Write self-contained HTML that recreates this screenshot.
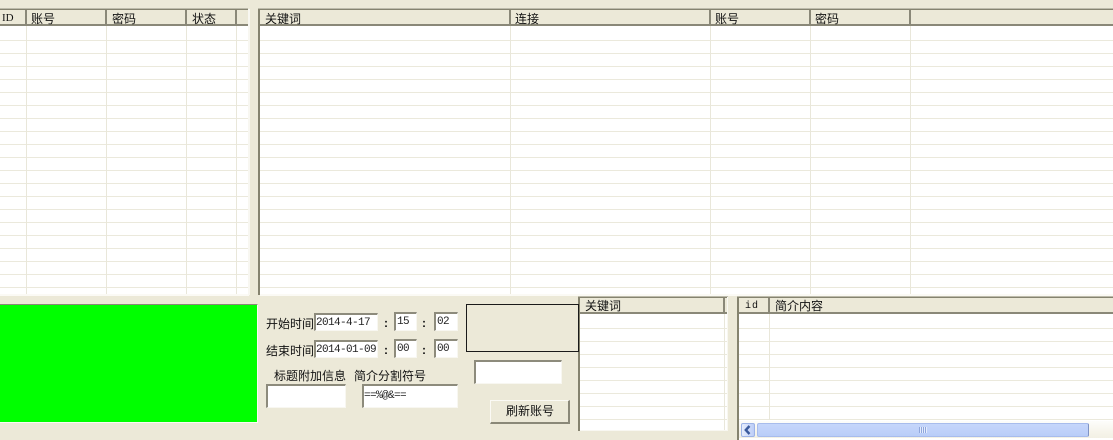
<!DOCTYPE html>
<html><head><meta charset="utf-8">
<style>
html,body{margin:0;padding:0;width:1113px;height:440px;overflow:hidden;background:#ece9d8;}
body{position:relative;font:12px/14px "Liberation Sans","WenQuanYi Zen Hei","Noto Sans CJK SC",sans-serif;color:#111;}
div{position:absolute;box-sizing:border-box;}
.grid{background-color:#fff;background-image:repeating-linear-gradient(to bottom,#fff 0,#fff 12px,#ebe9dc 12px,#ebe9dc 13px);}
.top{background:#85836f;height:1px;box-shadow:0 -1px 0 #bdbbab;}
.hd{background:#ece9d8;}
.hl{background:#8a8878;height:2px;}
.v{width:1px;background:#e9e7da;}
.s{width:2px;background:#8a8878;}
.t{white-space:nowrap;line-height:14px;}
.in{background:#fff;border-top:2px solid #8d8b7c;border-left:2px solid #8d8b7c;border-right:1px solid #f8f7f1;border-bottom:1px solid #f8f7f1;font:11px/17px "Liberation Mono",monospace;letter-spacing:-.6px;color:#222;white-space:nowrap;overflow:hidden;}
</style></head><body>

<!-- top left grid -->
<div class="grid" style="left:0;top:28px;width:248px;height:266px"></div>
<div style="left:0;top:26px;width:248px;height:2px;background:#fff"></div>
<div style="left:0;top:294px;width:249px;height:2px;background:#fbfaf5"></div>
<div style="left:248px;top:9px;width:2px;height:286px;background:#f8f7f1"></div>
<div class="top" style="left:0;top:9px;width:248px"></div>
<div class="hd" style="left:0;top:10px;width:248px;height:15px"></div>
<div class="hl" style="left:0;top:24px;width:248px"></div>
<div class="s" style="left:25px;top:10px;height:14px"></div>
<div class="s" style="left:105px;top:10px;height:14px"></div>
<div class="s" style="left:185px;top:10px;height:14px"></div>
<div class="s" style="left:235px;top:10px;height:14px"></div>
<div class="v" style="left:26px;top:26px;height:268px"></div>
<div class="v" style="left:106px;top:26px;height:268px"></div>
<div class="v" style="left:186px;top:26px;height:268px"></div>
<div class="v" style="left:236px;top:26px;height:268px"></div>
<div class="t" style="left:2px;top:11px;font:11px/14px 'Liberation Serif',serif">ID</div>
<div class="t" style="left:31px;top:12px">账号</div>
<div class="t" style="left:112px;top:12px">密码</div>
<div class="t" style="left:192px;top:12px">状态</div>

<!-- top right grid -->
<div class="grid" style="left:260px;top:28px;width:853px;height:266px"></div>
<div style="left:260px;top:26px;width:853px;height:2px;background:#fff"></div>
<div style="left:260px;top:294px;width:853px;height:2px;background:#fbfaf5"></div>
<div style="left:258px;top:9px;width:2px;height:286px;background:#85836f"></div>
<div class="top" style="left:258px;top:9px;width:855px"></div>
<div class="hd" style="left:260px;top:10px;width:853px;height:15px"></div>
<div class="hl" style="left:260px;top:24px;width:853px"></div>
<div class="s" style="left:509px;top:10px;height:14px"></div>
<div class="s" style="left:709px;top:10px;height:14px"></div>
<div class="s" style="left:809px;top:10px;height:14px"></div>
<div class="s" style="left:909px;top:10px;height:14px"></div>
<div class="v" style="left:510px;top:26px;height:268px"></div>
<div class="v" style="left:710px;top:26px;height:268px"></div>
<div class="v" style="left:810px;top:26px;height:268px"></div>
<div class="v" style="left:910px;top:26px;height:268px"></div>
<div class="t" style="left:265px;top:12px">关键词</div>
<div class="t" style="left:515px;top:12px">连接</div>
<div class="t" style="left:715px;top:12px">账号</div>
<div class="t" style="left:815px;top:12px">密码</div>

<!-- green panel -->
<div style="left:0;top:304px;width:258px;height:119px;background:#00ff00;border-top:1px solid #8a8878;border-right:1px solid #fbfaf5;border-bottom:1px solid #fbfaf5"></div>

<!-- form -->
<div class="t" style="left:266px;top:317px">开始时间</div>
<div class="t" style="left:266px;top:344px">结束时间</div>
<div class="in" style="left:314px;top:313px;width:64px;height:18px;padding-left:0">2014-4-17</div>
<div class="in" style="left:314px;top:340px;width:64px;height:18px;padding-left:0">2014-01-09</div>
<div class="in" style="left:394px;top:312px;width:23px;height:19px;padding-left:1px">15</div>
<div class="in" style="left:434px;top:312px;width:24px;height:19px;padding-left:1px">02</div>
<div class="in" style="left:394px;top:339px;width:23px;height:19px;padding-left:1px">00</div>
<div class="in" style="left:434px;top:339px;width:24px;height:19px;padding-left:1px">00</div>
<div class="t" style="left:384px;top:316px;font-weight:bold">:</div>
<div class="t" style="left:422px;top:316px;font-weight:bold">:</div>
<div class="t" style="left:384px;top:343px;font-weight:bold">:</div>
<div class="t" style="left:422px;top:343px;font-weight:bold">:</div>
<div class="t" style="left:274px;top:369px">标题附加信息</div>
<div class="t" style="left:354px;top:369px">简介分割符号</div>
<div class="in" style="left:266px;top:384px;width:80px;height:24px"></div>
<div class="in" style="left:362px;top:384px;width:96px;height:24px;line-height:21px">==%@&amp;==</div>

<!-- input + button -->
<div class="in" style="left:474px;top:360px;width:88px;height:24px"></div>
<div style="left:490px;top:400px;width:80px;height:24px;background:#ece9d8;border-top:1px solid #fbfaf5;border-left:1px solid #fbfaf5;border-right:2px solid #8a8878;border-bottom:2px solid #8a8878"></div>
<div class="t" style="left:490px;top:404px;width:80px;text-align:center">刷新账号</div>

<!-- keyword grid -->
<div class="grid" style="left:580px;top:316px;width:147px;height:114px"></div>
<div style="left:580px;top:314px;width:147px;height:2px;background:#fff"></div>
<div style="left:578px;top:297px;width:2px;height:134px;background:#85836f"></div>
<div class="top" style="left:578px;top:297px;width:150px"></div>
<div class="hd" style="left:580px;top:298px;width:148px;height:15px"></div>
<div class="hl" style="left:580px;top:312px;width:148px"></div>
<div class="s" style="left:723px;top:298px;height:14px"></div>
<div class="v" style="left:724px;top:314px;height:116px"></div>
<div style="left:727px;top:297px;width:1px;height:134px;background:#f8f7f1"></div>
<div style="left:580px;top:430px;width:148px;height:1px;background:#f8f7f1"></div>
<div class="t" style="left:585px;top:299px">关键词</div>

<!-- black box, above keyword border -->
<div style="left:466px;top:304px;width:113px;height:48px;border:1px solid #1a1a1a"></div>

<!-- id grid -->
<div class="grid" style="left:739px;top:316px;width:374px;height:107px"></div>
<div style="left:739px;top:314px;width:374px;height:2px;background:#fff"></div>
<div style="left:737px;top:297px;width:2px;height:143px;background:#85836f"></div>
<div class="top" style="left:737px;top:297px;width:376px"></div>
<div class="hd" style="left:739px;top:298px;width:374px;height:15px"></div>
<div class="hl" style="left:739px;top:312px;width:374px"></div>
<div class="s" style="left:768px;top:298px;height:14px"></div>
<div class="v" style="left:769px;top:314px;height:106px"></div>
<div class="t" style="left:745px;top:300px;font:10px/14px 'Liberation Mono',monospace;letter-spacing:1px">id</div>
<div class="t" style="left:775px;top:299px">简介内容</div>

<!-- scrollbar -->
<div style="left:739px;top:421px;width:374px;height:19px;background:linear-gradient(to bottom,#fdfdfb 0,#f6f4ea 60%,#f1efe2 100%)"></div>
<div style="left:739px;top:438px;width:374px;height:2px;background:#fff"></div>
<div style="left:741px;top:423px;width:14px;height:14px;background:linear-gradient(to right,#e6edfd,#bccdf7);border:1px solid #9db3e6;border-radius:2px"></div>
<svg style="position:absolute;left:741px;top:423px" width="14" height="14" viewBox="0 0 14 14"><path d="M8.5 3 L4.8 7 L8.5 11" fill="none" stroke="#3a5a9c" stroke-width="2.4"/></svg>
<div style="left:757px;top:423px;width:332px;height:14px;background:linear-gradient(to bottom,#c6d6fb,#b9cdf8);border:1px solid #a8bcec;border-right:1px solid #7f93c4;border-radius:2px"></div>
<div style="left:919px;top:427px;width:8px;height:6px;background:repeating-linear-gradient(to right,#8fa6dc 0,#8fa6dc 1px,#e4ecfd 1px,#e4ecfd 2px)"></div>

</body></html>
